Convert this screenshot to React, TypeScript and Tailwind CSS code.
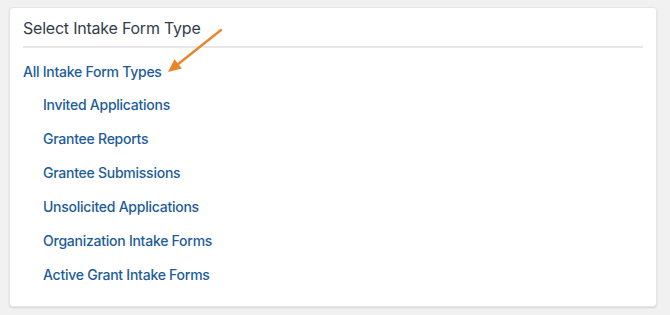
const subTypes = [
  'Invited Applications',
  'Grantee Reports',
  'Grantee Submissions',
  'Unsolicited Applications',
  'Organization Intake Forms',
  'Active Grant Intake Forms',
];

export default function App() {
  return (
    <div
      className="relative w-[670px] h-[315px] bg-[#f1f1f1] pt-[7px] pl-[9px]"
      style={{ fontFamily: 'Inter, "Noto Sans", sans-serif' }}
    >
      <div className="w-[648px] h-[300px] bg-white rounded-[4px] border border-[#e6e6e6] shadow-[0_1px_2px_rgba(0,0,0,0.12)] px-[13px] pt-[8px]">
        <div className="border-b-2 border-[#e7e7e7] pb-[6px]">
          <h2 className="text-[16px] leading-6 tracking-[-0.22px] text-[#323d4a]">Select Intake Form Type</h2>
        </div>
        <div className="pt-[14px]">
          <a className="block text-[14px] leading-5 font-medium tracking-[-0.25px] text-[#1d5c99]">All Intake Form Types</a>
          <ul className="pl-5 mt-[13px] flex flex-col gap-[14px]">
            {subTypes.map((t) => (
              <li key={t}>
                <a className="block text-[14px] leading-5 font-medium tracking-[-0.25px] text-[#1d5c99]">{t}</a>
              </li>
            ))}
          </ul>
        </div>
      </div>

      {/* annotation arrow */}
      <svg className="absolute left-0 top-0 pointer-events-none" width="670" height="315">
        <line x1="221" y1="30" x2="177" y2="65" stroke="#e8862a" strokeWidth="2.4" strokeLinecap="round" />
        <polygon points="168,72 181.9,68.6 174.5,59.2" fill="#e8862a" />
      </svg>
    </div>
  );
}
